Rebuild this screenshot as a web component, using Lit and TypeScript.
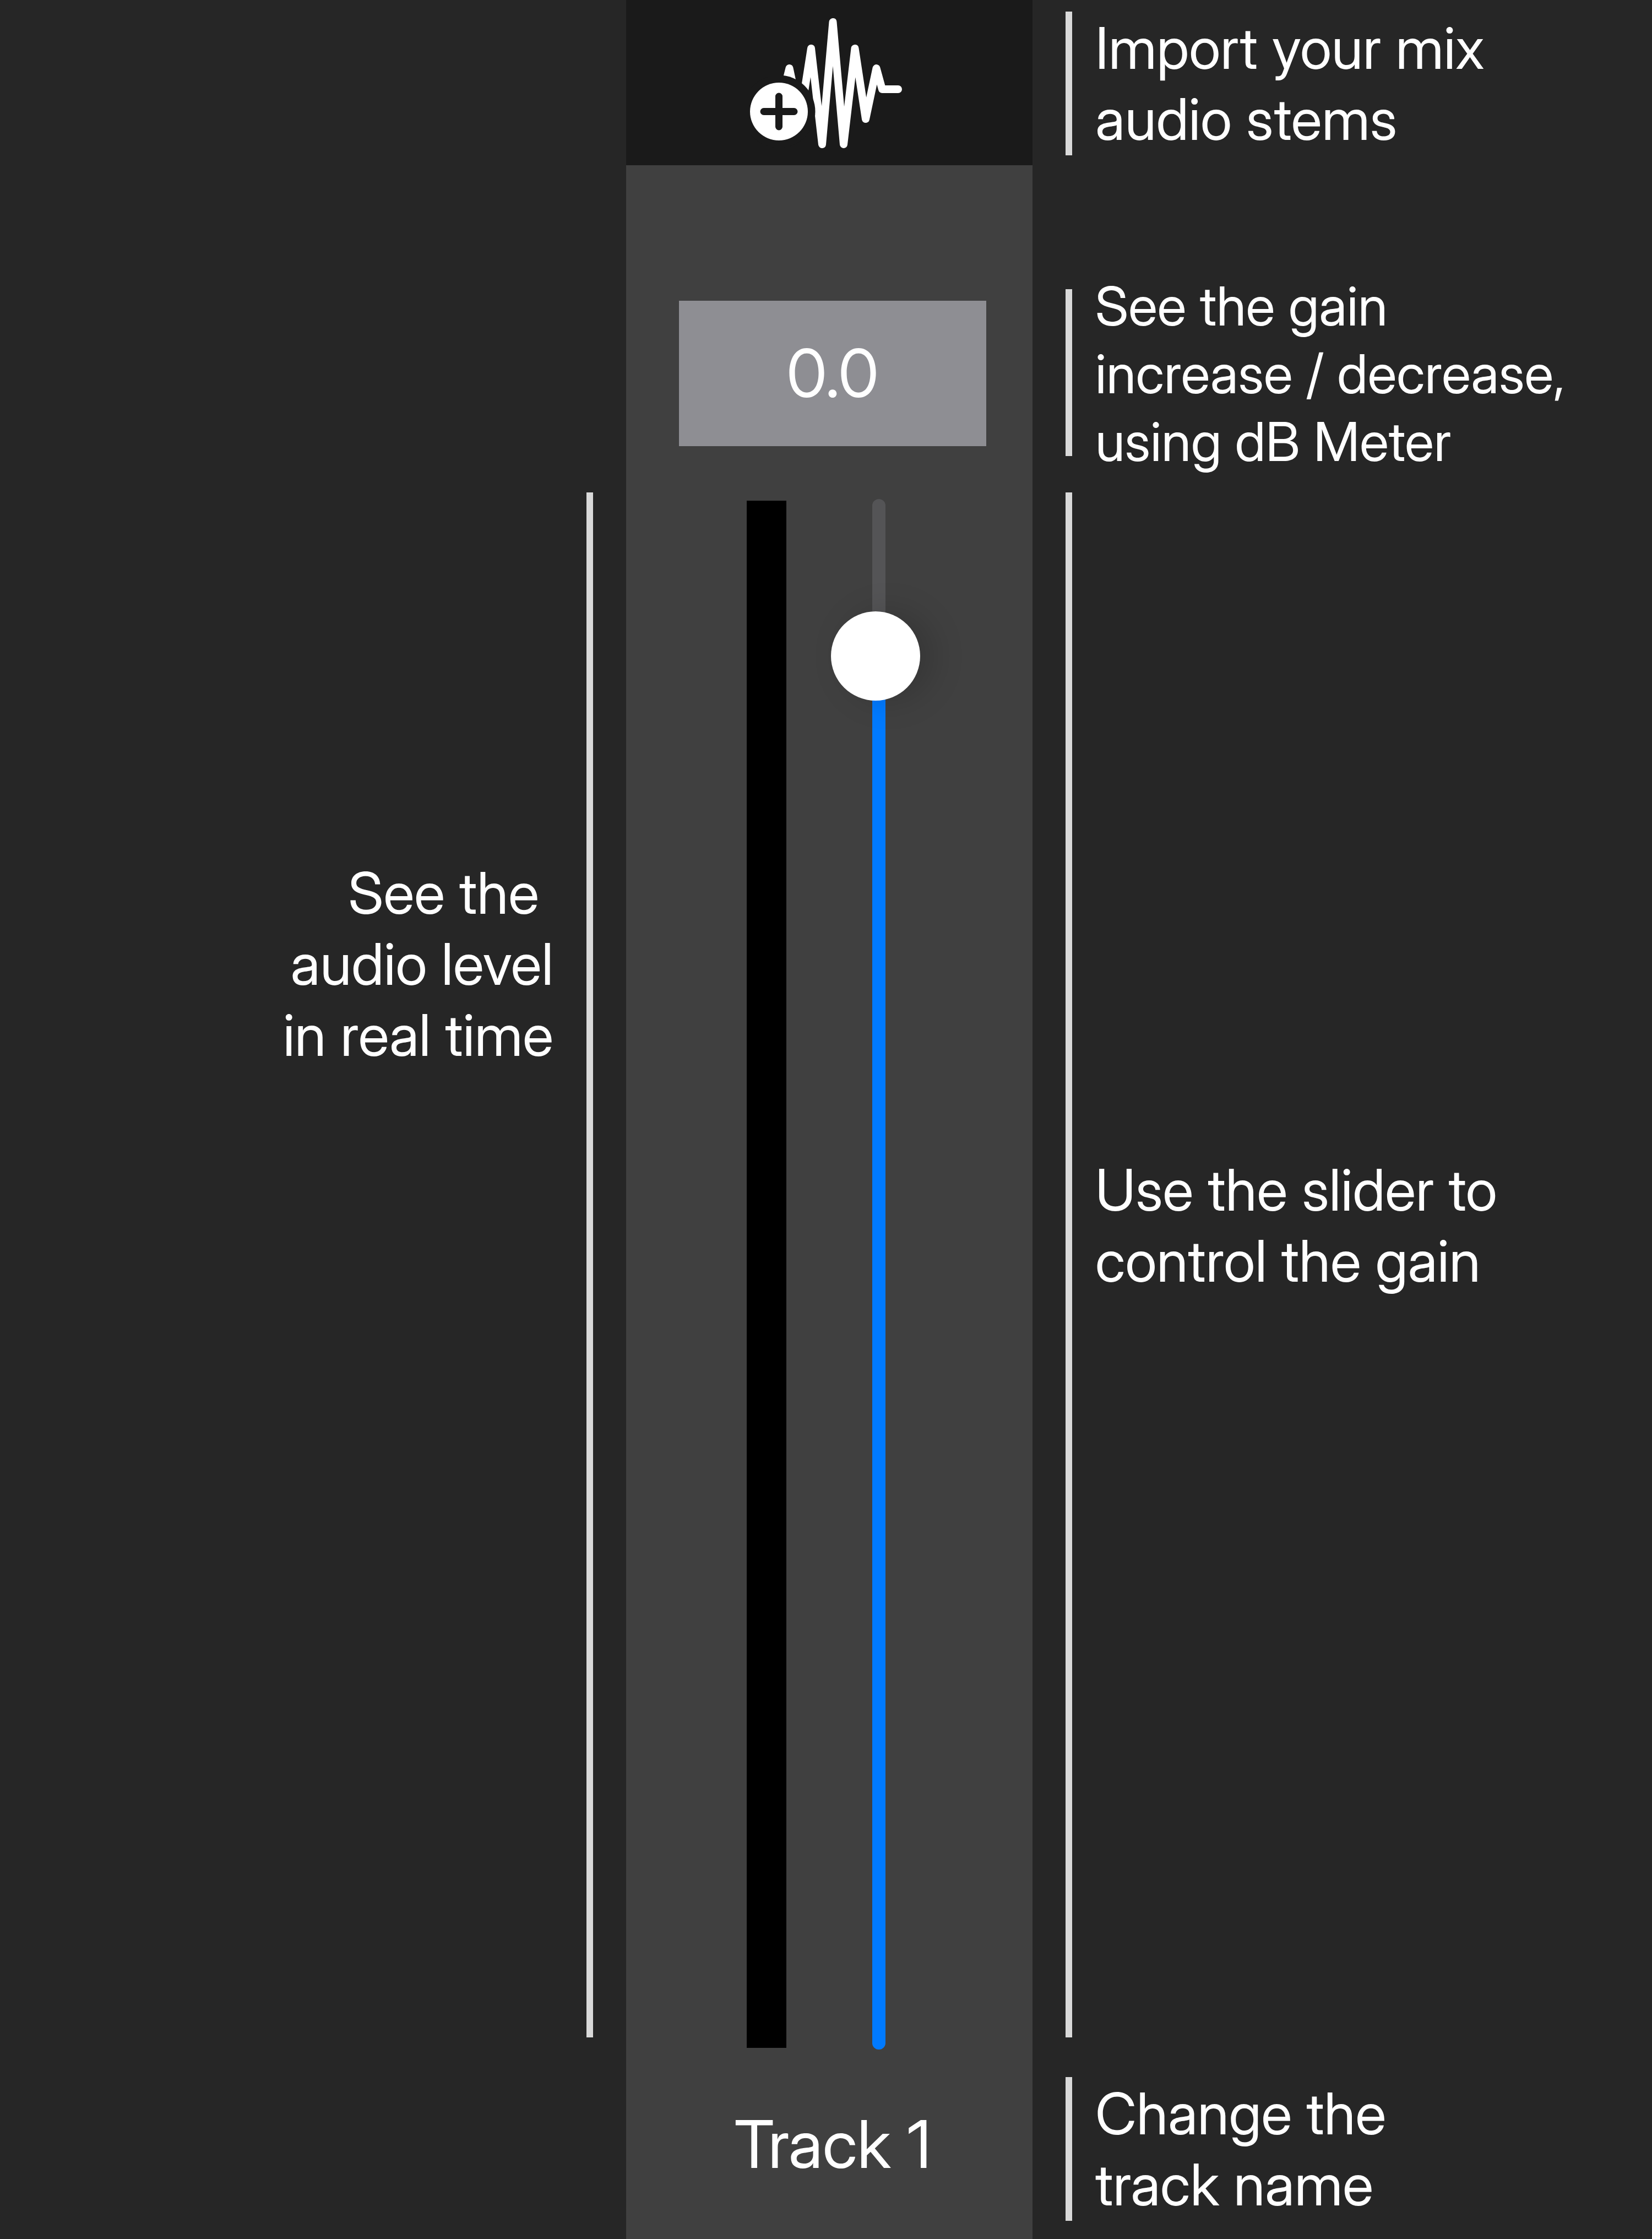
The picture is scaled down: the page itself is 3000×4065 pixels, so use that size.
import { LitElement, html, css } from "lit";
import { customElement, property, state } from "lit/decorators.js";
import { styleMap } from "lit/directives/style-map.js";

/** A caption made of fixed lines of text beside a vertical rule. */
@customElement("callout-note")
class CalloutNote extends LitElement {
  @property({ attribute: false }) lines: string[] = [];

  static styles = css`
    :host {
      display: flex;
      gap: 42px;
    }
    .rule {
      flex: none;
      width: 12px;
      background: #d9d9d9;
    }
    .text {
      margin: 0;
      align-self: var(--note-align, center);
      padding: var(--note-padding, 0);
    }
    .line {
      display: block;
      white-space: nowrap;
    }
    :host([compact]) {
      font-size: 98px;
      line-height: 123px;
    }
    :host([compact]) .rule {
      margin-block: 31px 35px;
    }
    :host([reverse]) {
      flex-direction: row-reverse;
      gap: 60px;
      text-align: right;
    }
  `;

  render() {
    return html`
      <div class="rule"></div>
      <p class="text">
        ${this.lines.map((line) => html`<span class="line">${line}</span>`)}
      </p>
    `;
  }
}

/** One mixer channel: import button, gain readout, meter, fader and name. */
@customElement("channel-strip")
class ChannelStrip extends LitElement {
  @state() private gain = 0;
  @state() private name = "Track 1";

  private readonly min = -60;
  private readonly max = 5;

  static styles = css`
    :host {
      display: flex;
      flex-direction: column;
      background: #404040;
    }
    .import {
      display: flex;
      align-items: center;
      justify-content: center;
      height: 300px;
      padding: 0;
      border: 0;
      background: #1a1a1a;
      cursor: pointer;
    }
    .icon {
      width: 288px;
      height: 240px;
    }
    .body {
      flex: 1;
      display: flex;
      flex-direction: column;
      padding: 246px 84px 100px 96px;
    }
    .gain {
      padding-block: 60px;
      background: #8e8e93;
      text-align: center;
      font-size: 120px;
      line-height: 144px;
    }
    .fader {
      flex: 1;
      display: flex;
      gap: 81px;
      margin-block: 96px 100px;
      padding-left: 123px;
    }
    .meter {
      width: 72px;
      margin-block: 3px;
      background: #000;
    }
    .slider {
      display: grid;
      width: 162px;
    }
    .rail {
      grid-area: 1 / 1;
      display: flex;
      flex-direction: column;
      justify-content: flex-end;
      width: 24px;
      margin-left: 75px;
      border-radius: 12px;
      background: #545456;
      overflow: hidden;
    }
    .fill {
      background: #007aff;
    }
    .range {
      grid-area: 1 / 1;
      width: 100%;
      height: 100%;
      margin: 0;
      appearance: none;
      background: none;
      writing-mode: vertical-lr;
      direction: rtl;
      cursor: pointer;
    }
    .range::-webkit-slider-thumb {
      appearance: none;
      width: 162px;
      height: 162px;
      border-radius: 50%;
      background: #fff;
      box-shadow: 24px 0 60px rgba(0, 0, 0, 0.16);
    }
    .name {
      box-sizing: border-box;
      width: 100%;
      height: 144px;
      padding: 0;
      border: 0;
      background: none;
      color: inherit;
      font: inherit;
      font-size: 120px;
      line-height: 144px;
      text-align: center;
    }
  `;

  private onGain(event: Event) {
    this.gain = (event.target as HTMLInputElement).valueAsNumber;
  }

  private onName(event: Event) {
    this.name = (event.target as HTMLInputElement).value;
  }

  render() {
    const level = ((this.gain - this.min) / (this.max - this.min)) * 100;
    return html`
      <button class="import" type="button" aria-label="Import audio">
        <svg class="icon" viewBox="22 30 288 240" aria-hidden="true">
          <path
            d="M56 162H84L93.5 124L113 216L133 88L153 262L172.5 40L192 262L212.5 88L232 216L251.5 124L262 162H291"
            fill="none"
            stroke="#fff"
            stroke-width="14"
            stroke-linecap="round"
            stroke-linejoin="round"
          />
          <circle cx="74.5" cy="202.5" r="66" fill="#1a1a1a" />
          <circle cx="74.5" cy="202.5" r="52.5" fill="#fff" />
          <path
            d="M47 202.5H102M74.5 175V230"
            stroke="#1a1a1a"
            stroke-width="13"
            stroke-linecap="round"
          />
        </svg>
      </button>
      <div class="body">
        <output class="gain" for="gain">${this.gain.toFixed(1)}</output>
        <div class="fader">
          <div class="meter"></div>
          <div class="slider">
            <div class="rail">
              <div class="fill" style=${styleMap({ height: `${level}%` })}></div>
            </div>
            <input
              id="gain"
              class="range"
              type="range"
              aria-label="Gain"
              min=${this.min}
              max=${this.max}
              step="0.1"
              .value=${String(this.gain)}
              @input=${this.onGain}
            />
          </div>
        </div>
        <input
          class="name"
          type="text"
          aria-label="Track name"
          spellcheck="false"
          .value=${this.name}
          @input=${this.onName}
        />
      </div>
    `;
  }
}

@customElement("app-root")
class AppRoot extends LitElement {
  static styles = css`
    :host {
      display: grid;
      grid-template-columns: minmax(0, 379fr) minmax(0, 246fr) minmax(0, 375fr);
      min-height: 100vh;
      background: #262626;
      color: #fff;
      font-family: "Inter Display", Inter, "Liberation Sans", sans-serif;
      font-size: 104px;
      line-height: 129px;
    }
    .side {
      display: flex;
      flex-direction: column;
    }
    .before {
      padding: 894px 60px 366px;
    }
    .after {
      padding: 21px 60px 33px;
    }
    .short {
      height: 261px;
    }
    .gain {
      margin-block: 212px 31px;
    }
    .level,
    .control {
      flex: 1;
    }
    .level {
      --note-align: flex-start;
      --note-padding: 663px 0 0;
    }
    .control {
      --note-padding: 0 0 144px;
      margin-bottom: 72px;
    }
  `;

  render() {
    return html`
      <div class="side before">
        <callout-note
          class="level"
          reverse
          .lines=${["See the\u00a0", "audio level", "in real time"]}
        ></callout-note>
      </div>
      <channel-strip></channel-strip>
      <div class="side after">
        <callout-note
          class="short"
          .lines=${["Import your mix", "audio stems"]}
        ></callout-note>
        <callout-note
          class="gain"
          compact
          .lines=${["See the gain", "increase / decrease,", "using dB Meter"]}
        ></callout-note>
        <callout-note
          class="control"
          .lines=${["Use the slider to", "control the gain"]}
        ></callout-note>
        <callout-note
          class="short"
          .lines=${["Change the", "track name"]}
        ></callout-note>
      </div>
    `;
  }
}
